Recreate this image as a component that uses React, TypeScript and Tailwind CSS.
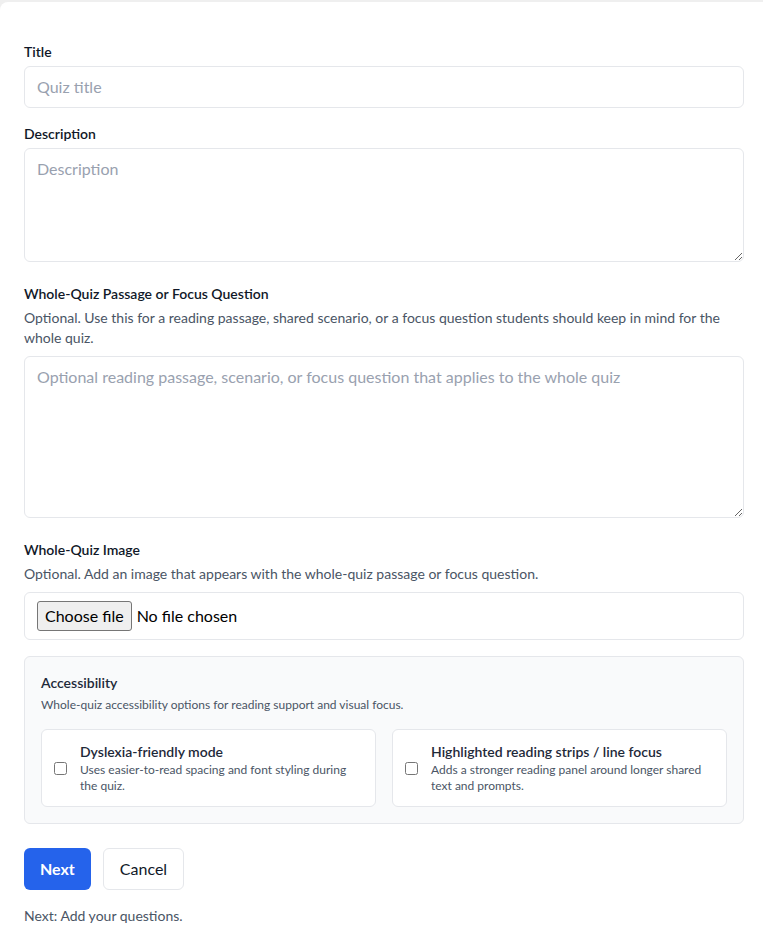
import React from "react";

function Field({ label, children, helper }: { label: string; children: React.ReactNode; helper?: string }) {
  return (
    <div>
      <label className="block text-sm font-semibold leading-5 text-gray-900">{label}</label>
      {helper && <p className="mt-1 text-sm leading-5 text-gray-600">{helper}</p>}
      {children}
    </div>
  );
}

function OptionCard({ title, desc }: { title: string; desc: string }) {
  return (
    <label className="flex items-center gap-[13px] rounded-md border border-gray-200 bg-white py-3 pl-3 pr-3">
      <input type="checkbox" className="h-[13px] w-[13px] shrink-0" />
      <span className="flex flex-col">
        <span className="text-sm font-semibold leading-5 text-gray-800">{title}</span>
        <span className="text-xs leading-4 text-gray-600">{desc}</span>
      </span>
    </label>
  );
}

export default function App() {
  return (
    <div className="min-h-[940px] bg-[#efefef] pt-[2px]" style={{ fontFamily: '"Lato", "Noto Sans", sans-serif' }}>
      <div className="min-h-[938px] rounded-tl-lg bg-white pb-6 pl-6 pr-[19px] pt-10">
        <Field label="Title">
          <input
            type="text"
            placeholder="Quiz title"
            className="mt-1 block w-full rounded-md border border-gray-200 px-3 py-2 text-base leading-6 text-gray-900 placeholder:text-gray-400 outline-none"
          />
        </Field>
        <div className="mt-4">
          <Field label="Description">
            <textarea
              rows={4}
              placeholder="Description"
              className="mt-1 block w-full rounded-md border border-gray-200 px-3 py-2 text-base leading-6 text-gray-900 placeholder:text-gray-400 outline-none"
            />
          </Field>
        </div>
        <div className="mt-[22px]">
          <Field
            label="Whole-Quiz Passage or Focus Question"
            helper="Optional. Use this for a reading passage, shared scenario, or a focus question students should keep in mind for the whole quiz."
          >
            <textarea
              rows={6}
              placeholder="Optional reading passage, scenario, or focus question that applies to the whole quiz"
              className="mt-2 block w-full rounded-md border border-gray-200 px-3 py-2 text-base leading-6 text-gray-900 placeholder:text-gray-400 outline-none"
            />
          </Field>
        </div>
        <div className="mt-[22px]">
          <Field
            label="Whole-Quiz Image"
            helper="Optional. Add an image that appears with the whole-quiz passage or focus question."
          >
            <label className="mt-2 flex items-center rounded-md border border-gray-200 px-3 py-2">
              <input type="file" className="hidden" />
              <span className="flex h-[30px] items-center rounded-[3px] border border-[#767676] bg-[#efefef] px-[7px] text-base text-black">
                Choose file
              </span>
              <span className="ml-[5px] text-base text-black">No file chosen</span>
            </label>
          </Field>
        </div>
        <div className="mt-4 rounded-md border border-gray-200 bg-gray-50 p-4">
          <h3 className="text-sm font-semibold leading-5 text-gray-800">Accessibility</h3>
          <p className="mt-1 text-xs leading-4 text-gray-600">
            Whole-quiz accessibility options for reading support and visual focus.
          </p>
          <div className="mt-4 grid grid-cols-2 gap-4">
            <OptionCard
              title="Dyslexia-friendly mode"
              desc="Uses easier-to-read spacing and font styling during the quiz."
            />
            <OptionCard
              title="Highlighted reading strips / line focus"
              desc="Adds a stronger reading panel around longer shared text and prompts."
            />
          </div>
        </div>
        <div className="mt-6 flex gap-3">
          <button className="rounded-md bg-[#2563eb] px-4 py-2 text-base font-bold leading-6 text-white">Next</button>
          <button className="rounded-md border border-gray-200 bg-white px-4 py-2 text-base leading-6 text-gray-900">
            Cancel
          </button>
        </div>
        <p className="mt-4 text-sm leading-5 text-gray-600">Next: Add your questions.</p>
      </div>
    </div>
  );
}
